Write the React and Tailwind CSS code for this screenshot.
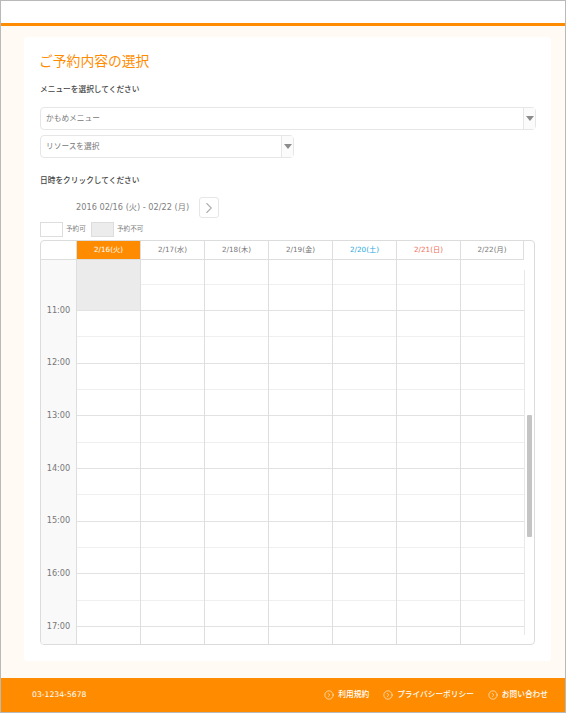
import { ChevronRight, CircleChevronRight } from 'lucide-react';

const days = [
  { label: '2/16(火)', tone: 'bg-[#ff8c00] text-white' },
  { label: '2/17(水)', tone: 'text-[#777]' },
  { label: '2/18(木)', tone: 'text-[#777]' },
  { label: '2/19(金)', tone: 'text-[#777]' },
  { label: '2/20(土)', tone: 'text-[#29a9e0]' },
  { label: '2/21(日)', tone: 'text-[#f0705a]' },
  { label: '2/22(月)', tone: 'text-[#777]' },
];
const hours = ['11:00', '12:00', '13:00', '14:00', '15:00', '16:00', '17:00'];
// half hour slots under the first partial ones
const slots = Array.from({ length: 13 }, (_, i) => i);
const links = ['利用規約', 'プライバシーポリシー', 'お問い合わせ'];

function Caret() {
  return (
    <svg width="8" height="5" viewBox="0 0 8 5" className="fill-[#8c8c8c]">
      <path d="M0 0h8L4 5z" />
    </svg>
  );
}

function SelectBox({ label, className }) {
  return (
    <div className={`flex h-[23px] items-stretch rounded-[4px] border border-[#e6e6e6] bg-white ${className}`}>
      <div className="flex-1 pl-[5px] text-[7.7px] leading-[21px] text-[#777]">{label}</div>
      <div className="flex w-[12px] items-center justify-center border-l border-[#e6e6e6] bg-[#fbfbfb]"><Caret /></div>
    </div>
  );
}

function DayColumn({ busy, last }) {
  return (
    <div className={`shrink-0 ${last ? 'w-[63px]' : 'w-[64px] border-r border-[#dedede]'}`}>
      <div className={`h-[25px] border-b ${busy ? 'border-[#ebebeb] bg-[#ebebeb]' : 'border-[#efefef]'}`} />
      <div className={`h-[26px] border-b ${busy ? 'border-[#e2e2e2] bg-[#ebebeb]' : 'border-[#e2e2e2]'}`} />
      {slots.map((i) => (
        <div key={i} className={`h-[26.33px] border-b ${i % 2 ? 'border-[#e2e2e2]' : 'border-[#efefef]'}`} />
      ))}
    </div>
  );
}

export default function App() {
  return (
    <div className="flex h-[713px] w-[566px] flex-col border border-[#b9b9b9] bg-[#fffaf3] font-['DejaVu_Sans','Noto_Sans_CJK_JP',sans-serif]">
      <div className="h-[25px] shrink-0 border-b-[3px] border-[#ff8c00] bg-white" />

      <div className="mt-[11px] mr-[14px] ml-[23px] h-[624px] rounded-[3px] bg-white px-[16px] pt-[14px]">
        <h1 className="-ml-[1px] text-[13.8px] leading-[20px] font-normal text-[#ff8c00]">ご予約内容の選択</h1>
        <p className="mt-[13px] text-[7.7px] leading-[12px] font-medium text-[#444]">メニューを選択してください</p>

        <SelectBox label="かもめメニュー" className="mt-[11px] w-[496px]" />
        <SelectBox label="リソースを選択" className="mt-[5px] w-[254px]" />

        <p className="mt-[17px] text-[7.7px] leading-[12px] font-medium text-[#444]">日時をクリックしてください</p>

        <div className="mt-[10px] flex h-[21px] items-center pl-[36px]">
          <span className="w-[123px] text-[8.2px] text-[#808080]">2016 02/16 (火) - 02/22 (月)</span>
          <div className="flex h-[21px] w-[20px] items-center justify-center rounded-[3px] border border-[#e6e6e6] bg-white">
            <ChevronRight size={18} strokeWidth={1.5} className="text-[#b0b0b0]" />
          </div>
        </div>

        <div className="mt-[4px] flex h-[15px] items-center text-[6.6px] text-[#808080]">
          <span className="h-[15px] w-[23px] border border-[#ddd] bg-white" />
          <span className="ml-[3px] w-[25px]">予約可</span>
          <span className="h-[15px] w-[23px] border border-[#ddd] bg-[#ececec]" />
          <span className="ml-[3px]">予約不可</span>
        </div>

        <div className="mt-[3px] h-[405px] w-[495px] overflow-hidden rounded-[4px] border border-[#dcdcdc]">
          <div className="flex h-[19px] text-[7.2px]">
            <div className="w-[36px] shrink-0 border-r border-b border-[#dedede]" />
            {days.map((d, i) => (
              <div
                key={d.label}
                className={`flex shrink-0 items-center justify-center border-r border-b border-[#dedede] ${i === 6 ? 'w-[63px]' : 'w-[64px]'} ${d.tone}`}
              >
                {d.label}
              </div>
            ))}
          </div>

          <div className="flex">
            <div className="w-[36px] shrink-0 border-r border-[#dedede] bg-[#f9f9f9] pt-[23.5px]">
              {hours.map((h) => (
                <div key={h} className="flex h-[52.66px] items-center justify-center text-[8.2px] text-[#777]">{h}</div>
              ))}
            </div>
            {days.map((d, i) => (
              <DayColumn key={d.label} busy={i === 0} last={i === 6} />
            ))}
            <div className="mt-[10px] h-[365px] w-[8px] border-l border-[#e8e8e8] pt-[145px] pl-[2px]">
              <div className="h-[122px] w-[5px] rounded-[1px] bg-[#c4c4c4]" />
            </div>
          </div>
        </div>
      </div>

      <div className="mt-auto flex h-[34px] items-center justify-between bg-[#ff8c00] pr-[17px] pl-[31px] text-[7.7px] font-medium text-white">
        <span>03-1234-5678</span>
        <div className="flex items-center gap-[14px]">
          {links.map((l) => (
            <span key={l} className="flex items-center gap-[4px]">
              <CircleChevronRight size={10} strokeWidth={1.4} />
              {l}
            </span>
          ))}
        </div>
      </div>
    </div>
  );
}
